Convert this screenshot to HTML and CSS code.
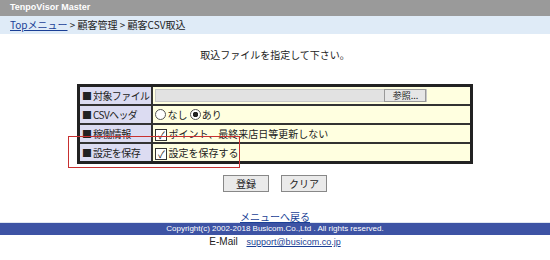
FILE: index.html
```html
<!DOCTYPE html>
<html>
    <head>
        <meta charset="UTF-8" />
        <title>TenpoVisor Master</title>
        <link rel="stylesheet" href="styles.css">
    </head>
    <body>
        <div class="titleBar">TenpoVisor Master</div>
        <div class="crumbs"><a href="#">Topメニュー</a> &gt; 顧客管理 &gt; 顧客CSV取込</div>
        <div class="guide">取込ファイルを指定して下さい。</div>
        <div class="formArea">
            <table class="inputTable">
                <tr>
                    <th>■ 対象ファイル</th>
                    <td><span class="fileBox"><span class="fileBtn">参照...</span></span></td>
                </tr>
                <tr>
                    <th>■ CSVヘッダ</th>
                    <td><span class="radio"></span>なし <span class="radio on"></span>あり</td>
                </tr>
                <tr>
                    <th>■ 稼働情報</th>
                    <td><span class="check">✓</span>ポイント、最終来店日等更新しない</td>
                </tr>
                <tr>
                    <th>■ 設定を保存</th>
                    <td><span class="check">✓</span>設定を保存する</td>
                </tr>
            </table>
            <div class="mark"></div>
        </div>
        <div class="buttons">
            <span class="btn">登録</span>
            <span class="btn">クリア</span>
        </div>
        <div class="backLink"><a href="#">メニューへ戻る</a></div>
        <div class="footer">Copyright(c) 2002-2018 Busicom.Co.,Ltd . All rights reserved.</div>
        <div class="mail">E-Mail <a href="#">support@busicom.co.jp</a></div>
    </body>
</html>
```

FILE: styles.css
```css
body {
    margin: 0;
    width: 550px;
    font-family: "Noto Sans CJK JP", "Noto Sans", sans-serif;
    font-size: 10px;
    color: #222;
    background: #fff;
}
a {
    color: #1a3f96;
}
.titleBar {
    height: 16px;
    line-height: 15px;
    background: #9a9a9a;
    color: #fff;
    font-family: "Liberation Sans", sans-serif;
    font-weight: bold;
    font-size: 9px;
    padding-left: 10px;
}
.crumbs {
    height: 18px;
    line-height: 18px;
    background: #dfebf7;
    padding-left: 10px;
    font-size: 10px;
}
.guide {
    text-align: center;
    margin-top: 14px;
    line-height: 14px;
    font-size: 10px;
}
.formArea {
    position: relative;
    width: 396px;
    margin: 22px auto 0;
}
.inputTable {
    width: 396px;
    border-collapse: collapse;
    border: 3px solid #222;
}
.inputTable th,
.inputTable td {
    border: 2px solid #333;
    height: 17px;
    padding: 0 2px;
    font-size: 10px;
    font-weight: normal;
    text-align: left;
    white-space: nowrap;
}
.inputTable th {
    width: 66px;
    letter-spacing: -0.6px;
    background: #dcdcf2;
}
.inputTable td {
    background: #ffffe0;
}
.fileBox {
    display: flex;
    justify-content: flex-end;
    height: 11px;
    width: 270px;
    background: #e2e2e2;
    border: 1px solid #c8c8c8;
}
.fileBtn {
    width: 40px;
    line-height: 11px;
    text-align: center;
    background: #e6e6e6;
    border: 1px solid #999;
    margin: -1px 0;
    font-size: 9px;
}
.radio {
    display: inline-block;
    width: 9px;
    height: 9px;
    border: 1px solid #555;
    border-radius: 50%;
    vertical-align: -1px;
    margin-right: 1px;
    background: #fff;
}
.radio.on {
    background: radial-gradient(circle, #222 2.5px, #fff 3px);
}
.check {
    display: inline-block;
    width: 10px;
    height: 10px;
    line-height: 10px;
    border: 1px solid #333;
    background: #fff;
    font-size: 10px;
    text-align: center;
    margin-right: 1px;
    vertical-align: -1px;
}
.mark {
    position: absolute;
    left: -9px;
    top: 52px;
    width: 170px;
    height: 30px;
    border: 1px solid #c83030;
}
.buttons {
    display: flex;
    justify-content: center;
    gap: 12px;
    margin-top: 11px;
}
.btn {
    width: 44px;
    height: 15px;
    line-height: 15px;
    text-align: center;
    background: #eaeaea;
    border: 1px solid #888;
    font-size: 10px;
}
.backLink {
    text-align: center;
    margin-top: 20px;
    line-height: 10px;
    font-size: 10px;
}
.footer {
    border-top: 1px solid #dfe6f0;
    height: 12px;
    line-height: 12px;
    background: #3d53a4;
    color: #fff;
    text-align: center;
    font-family: "Liberation Sans", sans-serif;
    font-size: 8px;
}
.mail {
    text-align: center;
    font-family: "Liberation Sans", sans-serif;
    font-size: 10px;
    line-height: 14px;
}
.mail a {
    margin-left: 6px;
    font-size: 9px;
}
```
